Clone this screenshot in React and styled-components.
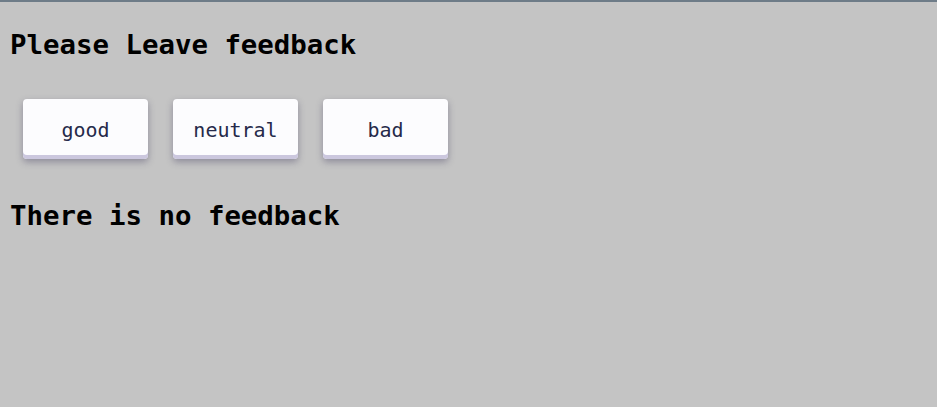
import React, { useState } from "react";
import styled, { createGlobalStyle } from "styled-components";

const GlobalStyle = createGlobalStyle`
	html, body {
		margin: 0;
		padding: 0;
	}
	body {
		background-color: #c4c4c4;
		border-top: 2px solid #6e7c88;
		min-height: 100vh;
		box-sizing: border-box;
		font-family: "DejaVu Sans Mono", "Liberation Mono", monospace;
	}
`;

function App() {
	const [stats, setStats] = useState({ good: 0, neutral: 0, bad: 0 });
	const total = stats.good + stats.neutral + stats.bad;

	const leave = (key) => setStats((s) => ({ ...s, [key]: s[key] + 1 }));

	return (
		<Wrapper>
			<GlobalStyle />
			<Title>Please Leave feedback</Title>
			<Options>
				{Object.keys(stats).map((key) => (
					<Button key={key} onClick={() => leave(key)}>
						{key}
					</Button>
				))}
			</Options>
			{total === 0 ? (
				<Title>There is no feedback</Title>
			) : (
				<Title>
					good: {stats.good} neutral: {stats.neutral} bad: {stats.bad}
				</Title>
			)}
		</Wrapper>
	);
}

export default App;

const Wrapper = styled.div`
	padding: 0 10px;
`;
const Title = styled.h2`
	margin: 27px 0 0;
	font-size: 27.4px;
	font-weight: 700;
	color: #000;
	line-height: 32px;
`;
const Options = styled.div`
	display: flex;
	gap: 25px;
	padding: 38px 13px 0;
	margin-bottom: 41px;
`;
const Button = styled.button`
	width: 125px;
	height: 60px;
	padding: 2px 0 0;
	border: none;
	border-radius: 4px;
	background-color: #fcfcfe;
	color: #262a4a;
	font-family: "DejaVu Sans Mono", "Liberation Mono", monospace;
	font-size: 20px;
	cursor: pointer;
	box-shadow: inset 0 -4px 0 #cbc7de, 0 3px 7px rgba(60, 55, 90, 0.4);
`;
